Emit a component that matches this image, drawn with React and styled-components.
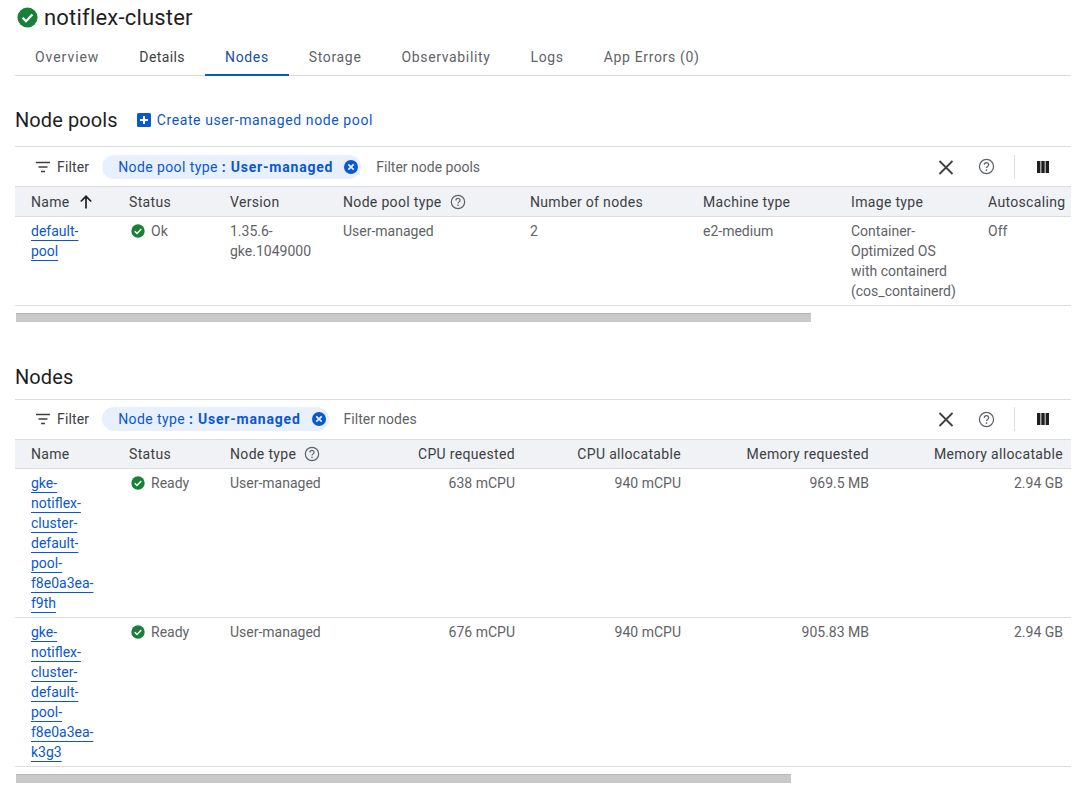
import styled, { createGlobalStyle } from 'styled-components'

const Global = createGlobalStyle`
  html, body {
    margin: 0;
    padding: 0;
    background: #fff;
    overflow: hidden;
  }
  body {
    font-family: Roboto, "Noto Sans", "Liberation Sans", sans-serif;
    color: #1f1f1f;
  }
`
const Page = styled.div`
  width: 1091px;
  height: 790px;
  box-sizing: border-box;
  padding: 0 20px 0 15px;
  overflow: hidden;
`
const TitleRow = styled.div`
  display: flex;
  align-items: center;
  gap: 6px;
  height: 34px;
  padding-left: 2px;
`
const PageTitle = styled.h1`
  margin: 0;
  font-size: 22px;
  font-weight: 400;
  letter-spacing: 0.2px;
  color: #1f1f1f;
`
const Tabs = styled.div`
  display: flex;
  height: 41px;
  border-bottom: 1px solid #dadce0;
`
const Tab = styled.div`
  display: flex;
  align-items: center;
  padding: 6px 20px 0;
  font-size: 14px;
  font-weight: 450;
  letter-spacing: ${p => p.$track || 0.65}px;
  color: ${p => p.$active ? '#174ea6' : p.$dark ? '#3c4043' : '#5f6368'};
  border-bottom: ${p => p.$active ? '2px solid #0b57d0' : '2px solid transparent'};
  margin-bottom: -1px;
`
const SectionHead = styled.div`
  display: flex;
  align-items: center;
  height: 30px;
  gap: 19px;
  margin-top: ${p => p.$top}px;
`
const SectionTitle = styled.h2`
  margin: 0;
  font-size: 20px;
  font-weight: 400;
  letter-spacing: 0.1px;
  color: #1f1f1f;
`
const CreateLink = styled.a`
  display: flex;
  align-items: center;
  gap: 6px;
  font-size: 14px;
  font-weight: 450;
  letter-spacing: 0.6px;
  color: #0b57d0;
`
const FilterBar = styled.div`
  display: flex;
  align-items: center;
  height: 39px;
  margin-top: ${p => p.$top}px;
  border-top: 1px solid #dadce0;
  border-bottom: 1px solid #dadce0;
`
const FilterButton = styled.div`
  display: flex;
  align-items: center;
  gap: 6px;
  margin-left: 20px;
  font-size: 14px;
  font-weight: 450;
  letter-spacing: 0.15px;
  color: #3c4043;
`
const Chip = styled.div`
  display: flex;
  align-items: center;
  height: 24px;
  margin-left: 13px;
  padding: 0 2px 0 16px;
  gap: 10px;
  background: #e8f0fe;
  border-radius: 12px;
  font-size: 14px;
  letter-spacing: 0.4px;
  color: #0b57d0;
  white-space: nowrap;
  b {
    font-weight: 700;
    letter-spacing: 0.8px;
  }
`
const FilterInput = styled.span`
  margin-left: 15px;
  font-size: 14px;
  color: #5f6368;
`
const BarActions = styled.div`
  display: flex;
  align-items: center;
  margin-left: auto;
  height: 24px;
`
const IconSlot = styled.span`
  display: flex;
  align-items: center;
  justify-content: center;
  width: 24px;
  height: 24px;
  margin-left: ${p => p.$left || 0}px;
  margin-right: ${p => p.$right || 0}px;
`
const Divider = styled.span`
  width: 1px;
  height: 24px;
  margin-left: 16px;
  background: #e0e0e0;
`
const Table = styled.table`
  width: 1056px;
  table-layout: fixed;
  border-collapse: collapse;
  font-size: 14px;
`
const Th = styled.th`
  height: 29px;
  padding: 1px 8px 0 16px;
  box-sizing: border-box;
  background: #f0f2f5;
  border-bottom: 1px solid #dadce0;
  font-weight: 450;
  font-size: 14px;
  letter-spacing: 0.33px;
  color: #3c4043;
  white-space: nowrap;
  text-align: ${p => p.$right ? 'right' : 'left'};
`
const HeadInner = styled.div`
  display: flex;
  align-items: center;
  gap: 8px;
`
const Td = styled.td`
  padding: 4px 8px 4px 16px;
  box-sizing: border-box;
  vertical-align: top;
  line-height: 20px;
  color: #5f6368;
  border-bottom: 1px solid #dadce0;
  text-align: ${p => p.$right ? 'right' : 'left'};
`
const NameLink = styled.a`
  color: #0b57d0;
  text-decoration: underline;
  text-underline-offset: 4px;
  text-decoration-thickness: 1px;
`
const Status = styled.span`
  display: flex;
  align-items: center;
  gap: 6px;
  padding-left: 2px;
`
const ScrollThumb = styled.div`
  height: 9px;
  margin: 7px 0 0 1px;
  background: #c9c9c9;
  border-top: 1px solid #b5b5b5;
  box-sizing: border-box;
`

const CheckCircle = ({ size }) => (
  <svg width={size} height={size} viewBox="0 0 24 24">
    <circle cx="12" cy="12" r="11.5" fill="#188038" />
    <path d="M6.4 12.4l3.9 3.9 7.3-7.6" fill="none" stroke="#fff" strokeWidth="2.5" />
  </svg>
)
const PlusBox = () => (
  <svg width="14" height="14" viewBox="0 0 14 14">
    <rect width="14" height="14" rx="1.5" fill="#0b57d0" />
    <path d="M7 3v8M3 7h8" stroke="#fff" strokeWidth="2" />
  </svg>
)
const FilterIcon = () => (
  <svg width="16" height="16" viewBox="0 0 16 16">
    <path d="M1 3.5h14M3.5 8h9M6 12.5h4" stroke="#3c4043" strokeWidth="1.6" />
  </svg>
)
const ChipClose = () => (
  <svg width="16" height="16" viewBox="0 0 16 16">
    <circle cx="8" cy="8" r="7" fill="#0b57d0" />
    <path d="M5.3 5.3l5.4 5.4M10.7 5.3l-5.4 5.4" stroke="#e8f0fe" strokeWidth="1.7" />
  </svg>
)
const CloseIcon = () => (
  <svg width="24" height="24" viewBox="0 0 24 24">
    <path d="M5.5 6l13 13M18.5 6l-13 13" stroke="#3c4043" strokeWidth="1.8" />
  </svg>
)
const HelpIcon = ({ size }) => (
  <svg width={size} height={size} viewBox="0 0 24 24" fill="none">
    <circle cx="12" cy="12" r="10" stroke="#5f6368" strokeWidth="1.8" />
    <path d="M8.9 9.6a3.1 3.1 0 0 1 6.2 0c0 2.2-3.1 2.3-3.1 4.6" stroke="#5f6368" strokeWidth="1.8" />
    <circle cx="12" cy="17" r="1.2" fill="#5f6368" />
  </svg>
)
const ColumnsIcon = () => (
  <svg width="14" height="14" viewBox="0 0 14 14">
    <path d="M1 1h3.4v12H1zM5.3 1h3.4v12H5.3zM9.6 1H13v12H9.6z" fill="#1f1f1f" />
  </svg>
)
const ArrowUp = () => (
  <svg width="16" height="16" viewBox="0 0 16 16" fill="none">
    <path d="M8 14.5V2.5M2.8 7.5L8 2.3l5.2 5.2" stroke="#1f1f1f" strokeWidth="1.7" />
  </svg>
)

const Toolbar = ({ top, chipLabel, placeholder }) => (
  <FilterBar $top={top}>
    <FilterButton><FilterIcon />Filter</FilterButton>
    <Chip>
      <span>{chipLabel} <b>: User-managed</b></span>
      <ChipClose />
    </Chip>
    <FilterInput>{placeholder}</FilterInput>
    <BarActions>
      <IconSlot><CloseIcon /></IconSlot>
      <IconSlot $left={16}><HelpIcon size={17} /></IconSlot>
      <Divider />
      <IconSlot $left={16} $right={16}><ColumnsIcon /></IconSlot>
    </BarActions>
  </FilterBar>
)

const poolCols = [98, 101, 113, 187, 173, 148, 137, 99]
const nodeCols = [98, 101, 150, 159, 166, 188, 194]

const nodes = [
  { name: 'f9th', cpu: '638 mCPU', mem: '969.5 MB' },
  { name: 'k3g3', cpu: '676 mCPU', mem: '905.83 MB' },
]

const Cols = ({ widths }) => (
  <colgroup>
    {widths.map((w, i) => <col key={i} width={w} />)}
  </colgroup>
)

export default function App() {
  return (
    <Page>
      <Global />
      <TitleRow>
        <CheckCircle size={21} />
        <PageTitle>notiflex-cluster</PageTitle>
      </TitleRow>
      <Tabs>
        <Tab $track={0.95}>Overview</Tab>
        <Tab $dark $track={0.4}>Details</Tab>
        <Tab $active>Nodes</Tab>
        <Tab>Storage</Tab>
        <Tab>Observability</Tab>
        <Tab>Logs</Tab>
        <Tab>App Errors (0)</Tab>
      </Tabs>

      <SectionHead $top={29}>
        <SectionTitle>Node pools</SectionTitle>
        <CreateLink><PlusBox />Create user-managed node pool</CreateLink>
      </SectionHead>
      <Toolbar top={11} chipLabel="Node pool type" placeholder="Filter node pools" />
      <Table>
        <Cols widths={poolCols} />
        <thead>
          <tr>
            <Th><HeadInner>Name <ArrowUp /></HeadInner></Th>
            <Th>Status</Th>
            <Th>Version</Th>
            <Th><HeadInner>Node pool type <HelpIcon size={16} /></HeadInner></Th>
            <Th>Number of nodes</Th>
            <Th>Machine type</Th>
            <Th>Image type</Th>
            <Th>Autoscaling</Th>
          </tr>
        </thead>
        <tbody>
          <tr>
            <Td><NameLink>default-pool</NameLink></Td>
            <Td><Status><CheckCircle size={14} />Ok</Status></Td>
            <Td>1.35.6-gke.1049000</Td>
            <Td>User-managed</Td>
            <Td>2</Td>
            <Td>e2-medium</Td>
            <Td>Container-Optimized OS with containerd (cos_containerd)</Td>
            <Td>Off</Td>
          </tr>
        </tbody>
      </Table>
      <ScrollThumb style={{ width: 795 }} />

      <SectionHead $top={40}>
        <SectionTitle>Nodes</SectionTitle>
      </SectionHead>
      <Toolbar top={7} chipLabel="Node type" placeholder="Filter nodes" />
      <Table>
        <Cols widths={nodeCols} />
        <thead>
          <tr>
            <Th>Name</Th>
            <Th>Status</Th>
            <Th><HeadInner>Node type <HelpIcon size={16} /></HeadInner></Th>
            <Th $right>CPU requested</Th>
            <Th $right>CPU allocatable</Th>
            <Th $right>Memory requested</Th>
            <Th $right>Memory allocatable</Th>
          </tr>
        </thead>
        <tbody>
          {nodes.map(n => (
            <tr key={n.name}>
              <Td><NameLink>gke-notiflex-cluster-default-pool-f8e0a3ea-{n.name}</NameLink></Td>
              <Td><Status><CheckCircle size={14} />Ready</Status></Td>
              <Td>User-managed</Td>
              <Td $right>{n.cpu}</Td>
              <Td $right>940 mCPU</Td>
              <Td $right>{n.mem}</Td>
              <Td $right>2.94 GB</Td>
            </tr>
          ))}
        </tbody>
      </Table>
      <ScrollThumb style={{ width: 775 }} />
    </Page>
  )
}
